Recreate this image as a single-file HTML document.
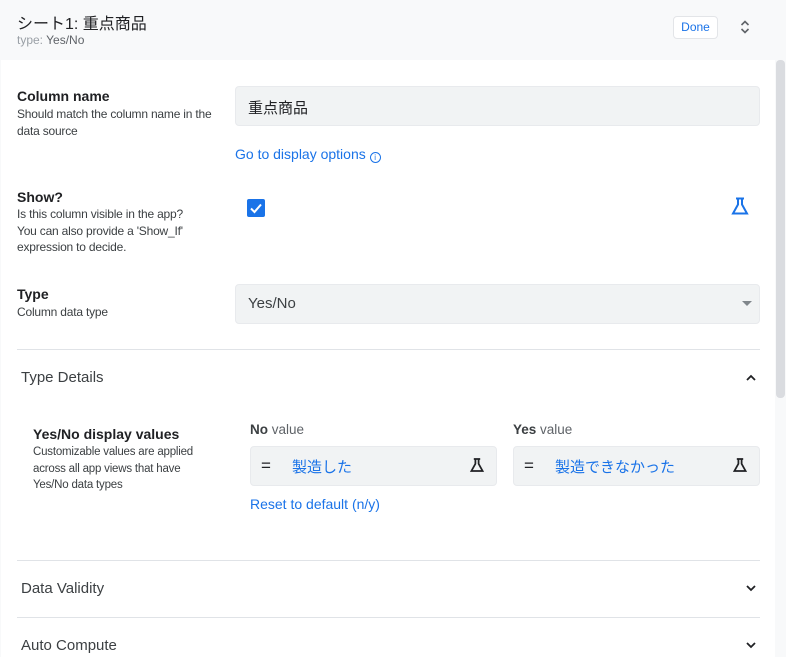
<!DOCTYPE html><html><head><meta charset="utf-8"><style>
*{margin:0;padding:0;box-sizing:border-box}
body{width:786px;height:657px;overflow:hidden;background:#f8f9fa;font-family:"Liberation Sans","Noto Sans CJK JP",sans-serif;color:#202124;position:relative}
.a{position:absolute}
.lbl{font-size:14px;font-weight:bold;color:#202124}
.sub{font-size:12px;color:#3c4043;line-height:16.5px;letter-spacing:-0.2px}
.box{background:#f1f3f4;border:1px solid #e8eaed;border-radius:4px}
.blue{color:#1a73e8}
.hr{height:1px;background:#e0e3e7;left:17px;width:743px}
.sec{font-size:15px;color:#3c4043;left:21px}
</style></head><body>
<div class="a" style="left:17px;top:10px;font-size:16px;color:#202124">シート1: 重点商品</div>
<div class="a" style="left:17px;top:33px;font-size:12px;color:#9aa0a6">type: <span style="color:#5f6368">Yes/No</span></div>
<div class="a" style="left:673px;top:16px;width:45px;height:23px;background:#fff;border:1px solid #e3e5e8;border-radius:4px;font-size:12px;color:#1a73e8;text-align:center;line-height:21px">Done</div>
<svg class="a" style="left:739px;top:19px" width="12" height="16" viewBox="0 0 12 16"><path d="M2.5 6 6 2.5 9.5 6M2.5 10 6 13.5 9.5 10" fill="none" stroke="#5f6368" stroke-width="1.6"/></svg>
<div class="a" style="left:1px;top:60px;width:774px;height:597px;background:#fff"></div>
<div class="a" style="left:776px;top:60px;width:9px;height:338px;background:#dadce0;border-radius:4px"></div>

<div class="a lbl" style="left:17px;top:88px">Column name</div>
<div class="a sub" style="left:17px;top:106px;width:200px">Should match the column name in the data source</div>
<div class="a box" style="left:235px;top:86px;width:525px;height:40px"></div>
<div class="a" style="left:248px;top:97px;font-size:15px">重点商品</div>
<div class="a blue" style="left:235px;top:146px;font-size:14px">Go to display options <span style="display:inline-block;width:11px;height:11px;border:1.2px solid #1a73e8;border-radius:50%;font-size:8px;text-align:center;line-height:9px;vertical-align:-1px">i</span></div>

<div class="a lbl" style="left:17px;top:189px">Show?</div>
<div class="a sub" style="left:17px;top:206px;width:186px">Is this column visible in the app? You can also provide a 'Show_If' expression to decide.</div>
<div class="a" style="left:247px;top:199px;width:18px;height:18px;background:#1a73e8;border-radius:2px"><svg width="18" height="18"><path d="M4 9.5 7.5 13 14 5.5" fill="none" stroke="#fff" stroke-width="2"/></svg></div>
<svg class="a" style="left:730px;top:196px" width="20" height="20" viewBox="0 0 20 20"><path d="M6 2.5h8M8 2.5v6L3 17.5h14L12 8.5v-6" fill="none" stroke="#1a73e8" stroke-width="2"/></svg>

<div class="a lbl" style="left:17px;top:286px">Type</div>
<div class="a sub" style="left:17px;top:304px">Column data type</div>
<div class="a box" style="left:235px;top:284px;width:525px;height:40px"></div>
<div class="a" style="left:248px;top:295px;font-size:15px;color:#3c4043">Yes/No</div>
<div class="a" style="left:742px;top:301px;border-left:5px solid transparent;border-right:5px solid transparent;border-top:5px solid #80868b"></div>

<div class="a hr" style="top:349px"></div>
<div class="a sec" style="top:369px">Type Details</div>
<svg class="a" style="left:745px;top:373px" width="12" height="10"><path d="M2 7 6 3 10 7" fill="none" stroke="#202124" stroke-width="1.8"/></svg>

<div class="a lbl" style="left:33px;top:426px">Yes/No display values</div>
<div class="a sub" style="left:33px;top:444px;width:180px;font-size:11.5px">Customizable values are applied across all app views that have Yes/No data types</div>
<div class="a" style="left:250px;top:422px;font-size:13.5px;color:#5f6368"><b style="color:#3c4043">No</b> value</div>
<div class="a" style="left:513px;top:422px;font-size:13.5px;color:#5f6368"><b style="color:#3c4043">Yes</b> value</div>
<div class="a box" style="left:250px;top:446px;width:247px;height:40px"></div>
<div class="a box" style="left:513px;top:446px;width:247px;height:40px"></div>
<div class="a" style="left:261px;top:456px;font-size:17px">=</div>
<div class="a blue" style="left:292px;top:456px;font-size:15px">製造した</div>
<div class="a" style="left:524px;top:456px;font-size:17px">=</div>
<div class="a blue" style="left:555px;top:456px;font-size:15px">製造できなかった</div>
<svg class="a" style="left:469px;top:457px" width="16" height="16" viewBox="0 0 20 20"><path d="M6 2.5h8M8 2.5v6L3 17.5h14L12 8.5v-6" fill="none" stroke="#202124" stroke-width="2.2"/></svg>
<svg class="a" style="left:732px;top:457px" width="16" height="16" viewBox="0 0 20 20"><path d="M6 2.5h8M8 2.5v6L3 17.5h14L12 8.5v-6" fill="none" stroke="#202124" stroke-width="2.2"/></svg>
<div class="a blue" style="left:250px;top:496px;font-size:14px">Reset to default (n/y)</div>

<div class="a hr" style="top:560px"></div>
<div class="a sec" style="top:580px">Data Validity</div>
<svg class="a" style="left:745px;top:583px" width="12" height="10"><path d="M2 3 6 7 10 3" fill="none" stroke="#202124" stroke-width="1.8"/></svg>
<div class="a hr" style="top:617px"></div>
<div class="a sec" style="top:637px">Auto Compute</div>
<svg class="a" style="left:745px;top:640px" width="12" height="10"><path d="M2 3 6 7 10 3" fill="none" stroke="#202124" stroke-width="1.8"/></svg>
</body></html>
